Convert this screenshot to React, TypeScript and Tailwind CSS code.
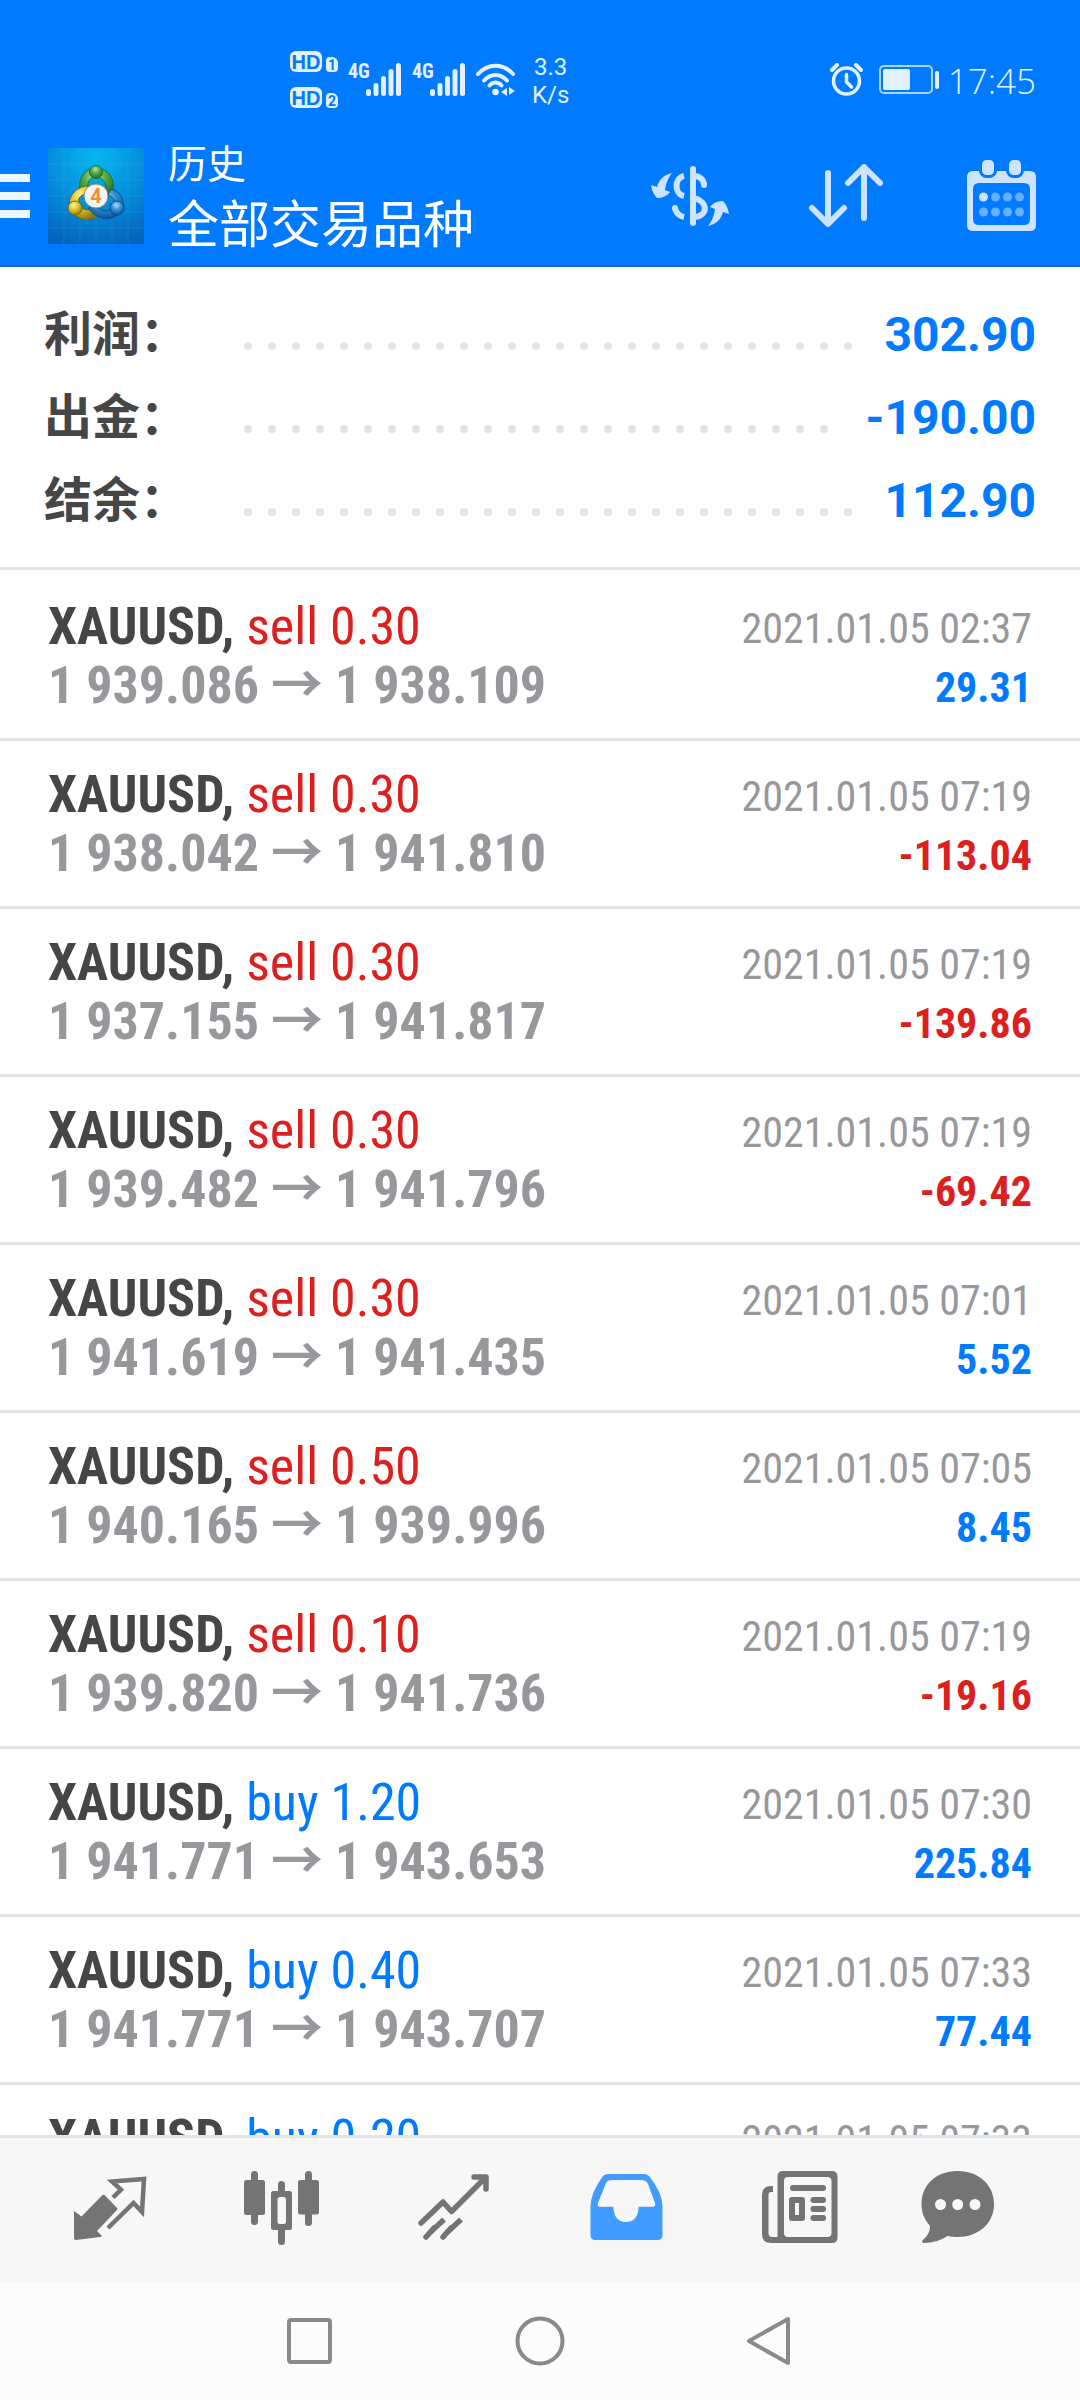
import { type ReactNode } from 'react';

interface Trade {
    side: 'sell' | 'buy';
    volume: string;
    open: string;
    close: string;
    time: string;
    profit: string;
}

const SUMMARY = [
    { label: '利润：', value: '302.90' },
    { label: '出金：', value: '-190.00' },
    { label: '结余：', value: '112.90' },
];

const TRADES: Trade[] = [
    { side: 'sell', volume: '0.30', open: '1 939.086', close: '1 938.109', time: '2021.01.05 02:37', profit: '29.31' },
    { side: 'sell', volume: '0.30', open: '1 938.042', close: '1 941.810', time: '2021.01.05 07:19', profit: '-113.04' },
    { side: 'sell', volume: '0.30', open: '1 937.155', close: '1 941.817', time: '2021.01.05 07:19', profit: '-139.86' },
    { side: 'sell', volume: '0.30', open: '1 939.482', close: '1 941.796', time: '2021.01.05 07:19', profit: '-69.42' },
    { side: 'sell', volume: '0.30', open: '1 941.619', close: '1 941.435', time: '2021.01.05 07:01', profit: '5.52' },
    { side: 'sell', volume: '0.50', open: '1 940.165', close: '1 939.996', time: '2021.01.05 07:05', profit: '8.45' },
    { side: 'sell', volume: '0.10', open: '1 939.820', close: '1 941.736', time: '2021.01.05 07:19', profit: '-19.16' },
    { side: 'buy', volume: '1.20', open: '1 941.771', close: '1 943.653', time: '2021.01.05 07:30', profit: '225.84' },
    { side: 'buy', volume: '0.40', open: '1 941.771', close: '1 943.707', time: '2021.01.05 07:33', profit: '77.44' },
    { side: 'buy', volume: '0.20', open: '1 941.771', close: '1 943.707', time: '2021.01.05 07:33', profit: '38.72' },
];

function HdBadge({ sim }: { sim: string }) {
    return (
        <div className="flex items-end gap-1">
            <span className="flex h-[21px] w-8 items-center justify-center rounded-md bg-[#e3f1ff] font-['Liberation_Sans'] text-[20px] leading-5 font-bold text-[#007aff]">
                HD
            </span>
            <span className="flex h-[15px] w-3 items-center justify-center rounded-sm rounded-tr-md bg-[#e3f1ff] text-[14px] leading-4 font-bold text-[#007aff]">
                {sim}
            </span>
        </div>
    );
}

function Signal() {
    return (
        <div className="flex h-[33px] items-start">
            <span className="w-[18px] font-['Roboto_Condensed','Roboto',sans-serif] text-[20px] leading-4 font-bold">4G</span>
            <svg width="36" height="33" viewBox="0 0 36 33" fill="currentColor" aria-hidden="true">
                <rect x="0" y="26" width="5" height="7" rx="2.5" />
                <rect x="7.5" y="20" width="5" height="13" rx="2.5" />
                <rect x="15" y="13" width="5" height="20" rx="2.5" />
                <rect x="22.5" y="6" width="5" height="27" rx="2.5" />
                <rect x="30" y="0" width="5" height="33" rx="2.5" />
            </svg>
        </div>
    );
}

function StatusBar() {
    return (
        <div className="flex items-start justify-between pt-[51px] pr-11 pl-[290px] text-[#e3f1ff]">
            <div className="flex items-start">
                <div className="mr-2.5 flex flex-col gap-[15px]">
                    <HdBadge sim="1" />
                    <HdBadge sim="2" />
                </div>
                <div className="flex gap-2.5 pt-3">
                    <Signal />
                    <Signal />
                    <svg width="40" height="33" viewBox="0 0 40 33" fill="none" stroke="currentColor" strokeWidth="4" strokeLinecap="round" aria-hidden="true">
                        <path d="M2 11C12 0 27 0 37 11" />
                        <path d="M8 17.500C15 10 24 10 31 17.500" />
                        <path d="M13.500 22.500C17 18.500 22 18.500 25.500 22.500" />
                        <circle cx="19.500" cy="29" r="3.300" fill="currentColor" stroke="none" />
                        <path d="M31 25V33L25 29ZM33 24L39 28L33 32Z" fill="currentColor" stroke="none" />
                    </svg>
                </div>
                <div className="ml-4 pt-0.5 text-center text-[24px] leading-7">
                    3.3
                    <br />
                    K/s
                </div>
            </div>
            <div className="flex items-start pt-3">
                <svg width="33" height="33" viewBox="0 0 33 33" fill="none" stroke="currentColor" strokeWidth="3.500" strokeLinecap="round" aria-hidden="true">
                    <circle cx="16.500" cy="18" r="13" />
                    <path d="M16.500 11.500V19L21.500 24" strokeWidth="3.500" />
                    <path d="M2 7L7 2M31 7L26 2" strokeWidth="4" />
                </svg>
                <svg className="ml-4" width="61" height="33" viewBox="0 0 61 33" aria-hidden="true">
                    <rect x="1" y="3" width="52" height="27" rx="4" fill="none" stroke="#a9d4ff" strokeWidth="2" />
                    <rect x="4" y="6" width="27" height="21" rx="2" fill="currentColor" />
                    <rect x="56" y="8" width="4" height="18" rx="2" fill="currentColor" />
                </svg>
                <span className="ml-2 font-['Open_Sans',sans-serif] text-[35px] leading-9 font-light">17:45</span>
            </div>
        </div>
    );
}

function AppLogo() {
    return (
        <svg className="shrink-0" width="96" height="96" viewBox="0 0 96 96" role="img" aria-label="MetaTrader 4">
            <defs>
                <radialGradient id="sky" cx="50%" cy="10%" r="95%">
                    <stop offset="0" stopColor="#06b7ee" />
                    <stop offset="0.500" stopColor="#058fdf" />
                    <stop offset="1" stopColor="#0563bb" />
                </radialGradient>
                <radialGradient id="green" cx="45%" cy="30%" r="70%">
                    <stop offset="0" stopColor="#b4e69b" />
                    <stop offset="0.500" stopColor="#4fa545" />
                    <stop offset="1" stopColor="#227226" />
                </radialGradient>
                <radialGradient id="gold" cx="40%" cy="30%" r="75%">
                    <stop offset="0" stopColor="#fff38a" />
                    <stop offset="0.500" stopColor="#d6c12f" />
                    <stop offset="1" stopColor="#86740c" />
                </radialGradient>
                <radialGradient id="azure" cx="45%" cy="30%" r="70%">
                    <stop offset="0" stopColor="#a9defa" />
                    <stop offset="0.500" stopColor="#2f8fd2" />
                    <stop offset="1" stopColor="#0a559a" />
                </radialGradient>
            </defs>
            <rect width="96" height="96" fill="url(#sky)" />
            <path d="M0 16H96M0 32H96M0 48H96M0 64H96M0 80H96M16 0V96M32 0V96M48 0V96M64 0V96M80 0V96" stroke="#4cc4f5" strokeOpacity="0.180" />
            <path d="M33 48C28 32 36 20 48 20C60 20 69 32 64 46L57 50C61 38 56 29 48 29C41 29 38 36 41 43Z" fill="url(#green)" stroke="#246e2a" />
            <path d="M41 38C28 38 19 49 22 60C26 71 39 75 50 68L46 60C40 63 33 62 31 56C29 50 33 46 40 46Z" fill="url(#gold)" stroke="#75680f" />
            <path d="M63 41C73 43 78 54 73 63C66 74 50 73 40 60L48 57C53 64 61 65 65 59C68 54 66 49 60 47Z" fill="url(#azure)" stroke="#0d4f8d" />
            <circle cx="48" cy="24" r="6.500" fill="url(#green)" stroke="#246e2a" />
            <circle cx="27" cy="60" r="7" fill="url(#gold)" stroke="#75680f" />
            <circle cx="69" cy="60" r="7" fill="url(#azure)" stroke="#0d4f8d" />
            <circle cx="48" cy="48" r="12" fill="#f4f3f1" stroke="#7c8a7c" />
            <text x="48" y="55" textAnchor="middle" fontFamily="Roboto" fontSize="20" fontWeight="700" fill="#f0912d">4</text>
        </svg>
    );
}

function Header() {
    return (
        <div className="mt-[23px] flex items-center">
            <button aria-label="菜单" className="flex h-24 w-12 shrink-0 flex-col justify-center gap-[10px]">
                <span className="h-2 w-[30px] bg-[#ecf7ff]" />
                <span className="h-2 w-[30px] bg-[#ecf7ff]" />
                <span className="h-2 w-[30px] bg-[#ecf7ff]" />
            </button>
            <AppLogo />
            <div className="ml-6 flex-1 pt-1.5 whitespace-nowrap text-white">
                <p className="text-[39px] leading-[54px]">历史</p>
                <h1 className="text-[51px] leading-[68px]">全部交易品种</h1>
            </div>
            <button aria-label="品种" className="flex h-24 w-[156px] items-center justify-center text-[#cce4ff]">
                <svg width="78" height="60" viewBox="0 0 78 60" fill="currentColor">
                    <rect x="39" y="0" width="6" height="60" rx="3" />
                    <path d="M21 7C12 9 8 14 6 21L0 19C1 25 3 29 6 32C11 32 16 30 19 26L14 24C15 17 17 12 21 7Z" />
                    <path d="M57 60C66 58 70 53 72 46L78 48C77 42 75 38 72 35C67 35 62 37 59 41L64 43C63 50 61 55 57 60Z" />
                    <g fill="none" stroke="currentColor" strokeWidth="6">
                        <path d="M33 10C23 12 23 28 33 30" />
                        <path d="M24 42C25 47 28 50 33 51" />
                        <path d="M43 10C49 10 53 14 53 19" />
                        <path d="M43 32C58 36 57 50 43 51" />
                    </g>
                    <circle cx="24" cy="42" r="3" />
                    <circle cx="53" cy="19" r="3" />
                </svg>
            </button>
            <button aria-label="排序" className="flex h-24 w-[156px] items-center justify-center text-[#cce4ff]">
                <svg width="74" height="64" viewBox="0 0 74 64" fill="none" stroke="currentColor" strokeWidth="6" strokeLinecap="round" strokeLinejoin="round">
                    <path d="M19 9V59M3 44L19 60L35 44" />
                    <path d="M55 54V4M39 19L55 3L71 19" />
                </svg>
            </button>
            <button aria-label="日期" className="flex h-24 w-[156px] items-center justify-center text-[#cce4ff]">
                <svg width="70" height="72" viewBox="0 0 70 72" fill="currentColor">
                    <path fillRule="evenodd" d="M6 11H63Q69 11 69 17V65Q69 71 63 71H6Q0 71 0 65V17Q0 11 6 11ZM12 23Q6 23 6 29V59Q6 65 12 65H57Q63 65 63 59V29Q63 23 57 23Z" />
                    <rect x="13.500" y="-1.500" width="15" height="18" rx="6" stroke="#007aff" strokeWidth="3" />
                    <rect x="40.500" y="-1.500" width="15" height="18" rx="6" stroke="#007aff" strokeWidth="3" />
                    <circle cx="16.500" cy="37" r="4.500" />
                    <g fill="#66afff">
                        <circle cx="28.500" cy="37" r="4.500" />
                        <circle cx="40.500" cy="37" r="4.500" />
                        <circle cx="52.500" cy="37" r="4.500" />
                        <circle cx="16.500" cy="52" r="4.500" />
                        <circle cx="28.500" cy="52" r="4.500" />
                        <circle cx="40.500" cy="52" r="4.500" />
                        <circle cx="52.500" cy="52" r="4.500" />
                    </g>
                </svg>
            </button>
        </div>
    );
}

function SummaryRow({ label, value }: { label: string; value: string }) {
    return (
        <div className="flex h-[83px] items-center text-[48px] leading-[60px] font-bold">
            <dt className="w-[196px] shrink-0 whitespace-nowrap text-[#464646]">{label}</dt>
            {/* Dots that do not fit wrap to a hidden second line */}
            <div className="mr-3 flex h-8 flex-1 flex-wrap overflow-hidden pt-[23px]" aria-hidden="true">
                {Array.from({ length: 40 }, (_, i) => (
                    <span key={i} className="mr-3 mb-6 ml-1 size-2 rounded-full bg-[#e4e4e4]" />
                ))}
            </div>
            <dd className="text-[#007aff]">{value}</dd>
        </div>
    );
}

function TradeRow({ trade }: { trade: Trade }) {
    return (
        <li className="flex h-[168px] shrink-0 items-start justify-between border-b-3 border-[#e4e4e4] px-12 pt-6 font-['Roboto_Condensed','Roboto','Noto_Sans_CJK_SC',sans-serif] whitespace-nowrap">
            <div className="text-[52px] leading-[59px]">
                <p>
                    <span className="font-bold text-[#464646]">XAUUSD, </span>
                    <span className={trade.side === 'buy' ? 'text-[#007aff]' : 'text-[#dc2020]'}>
                        {trade.side} {trade.volume}
                    </span>
                </p>
                <p className="font-bold text-[#97989c]">
                    {trade.open} → {trade.close}
                </p>
            </div>
            <div className="pt-0.5 text-right text-[42px] leading-[59px]">
                <p className="text-[#97989c]">{trade.time}</p>
                <p className={trade.profit.startsWith('-') ? 'font-bold text-[#dc2020]' : 'font-bold text-[#007aff]'}>
                    {trade.profit}
                </p>
            </div>
        </li>
    );
}

function Tab({ label, active, children }: { label: string; active?: boolean; children: ReactNode }) {
    return (
        <button
            aria-label={label}
            className={`flex flex-1 items-center justify-center ${active ? 'text-[#429bff]' : 'text-[#747474]'}`}
        >
            <svg width="120" height="84" viewBox="0 0 120 84" fill="currentColor">
                {children}
            </svg>
        </button>
    );
}

function TabBar() {
    return (
        <nav className="flex h-[147px] shrink-0 border-t-3 border-[#e4e4e4] bg-[#f7f7f7] px-6">
            <Tab label="行情">
                <path d="M52 27.500Q53.500 26 55 27.500L67 40Q68 41 67 42L47 63L51.500 67.500Q52 69 50 69L26 72Q24 72 24 70V43L31.500 48.500Z" />
                <path d="M63 29.500L71 21.700L62 13.500L94 11L92 44L83.500 35L58 60" fill="none" stroke="currentColor" strokeWidth="4.500" strokeLinejoin="miter" />
            </Tab>
            <Tab label="图表">
                <rect x="22" y="12" width="21" height="35" rx="2.500" />
                <rect x="29" y="3" width="7" height="54" rx="3.500" />
                <rect x="56" y="13" width="7" height="12" rx="3.500" />
                <rect x="56" y="58" width="7" height="19" rx="3.500" />
                <path fillRule="evenodd" d="M51.500 23H67.500Q70 23 70 25.500V59.500Q70 62 67.500 62H51.500Q49 62 49 59.500V25.500Q49 23 51.500 23ZM58 29Q55.500 29 55.500 31.500V53.500Q55.500 56 58 56H61.500Q64 56 64 53.500V31.500Q64 29 61.500 29Z" />
                <rect x="76" y="12" width="21" height="34.500" rx="2.500" />
                <rect x="83" y="3" width="7" height="55" rx="3.500" />
            </Tab>
            <Tab label="交易">
                <g fill="none" stroke="currentColor" strokeWidth="5.500" strokeLinecap="round">
                    <path d="M27 55L49 34L57.500 43.500L91 10" strokeLinejoin="round" />
                    <path d="M80 9H92V21" strokeLinejoin="round" />
                    <path d="M32 69L40 60M49 69L57 60" />
                    <path d="M36 64.500L50 51.500M53 64.500L67 51.500" strokeLinecap="butt" />
                </g>
            </Tab>
            <Tab label="历史" active>
                <path fillRule="evenodd" d="M42 6H78Q81 6 83 8Q96 24 96.500 38V67Q96.500 72 91.500 72H29.500Q24.500 72 24.500 67V38Q25 24 37 8Q39 6 42 6ZM46 12Q41.500 12 40 15L32 35Q31 38.700 34 38.700H47.500V41Q49 54 60 54Q71 54 72.500 41V38.700H87Q90 38.700 89 35L82 16Q80 12 75 12Z" />
            </Tab>
            <Tab label="新闻">
                <path fillRule="evenodd" d="M45 3H94Q99.500 3 99.500 8.500V69.500Q99.500 75 94 75H33Q24 75 24 66V27Q24 18 33 18H35V24H33Q30.500 24 30.500 27V65Q30.500 69 34.500 69H39.500V8.500Q39.500 3 45 3ZM50 9Q46 9 46 13V65Q46 69 50 69H89Q93.500 69 93.500 65V13Q93.500 9 89 9Z" />
                <rect x="52" y="17" width="36" height="6" rx="3" />
                <path fillRule="evenodd" d="M54 29H64Q67 29 67 32V50Q67 53 64 53H54Q51 53 51 50V32Q51 29 54 29ZM57 35V47H61V35Z" />
                <rect x="72.500" y="29" width="15.500" height="6" rx="3" />
                <rect x="72.500" y="38" width="15.500" height="6" rx="3" />
                <rect x="72.500" y="47" width="15.500" height="6" rx="3" />
            </Tab>
            <Tab label="消息">
                <path fillRule="evenodd" d="M47.500 3C69 3 84 17 84 36C84 56 68 69 47.500 69Q42 69 37.500 68Q27 75 14 75Q10 74 14 71Q20 66 20 58C14 51 11.500 44 11.500 36C11.500 17 26 3 47.500 3ZM30.500 31A5.500 5.500 0 1 0 30.500 42A5.500 5.500 0 1 0 30.500 31ZM47.700 31A5.500 5.500 0 1 0 47.700 42A5.500 5.500 0 1 0 47.700 31ZM65 31A5.500 5.500 0 1 0 65 42A5.500 5.500 0 1 0 65 31Z" />
            </Tab>
        </nav>
    );
}

function SystemNav() {
    return (
        <div className="flex h-[118px] shrink-0 items-center justify-center gap-[180px] bg-[#fcfcfc] text-[#8a8a8a]">
            <button aria-label="最近任务">
                <svg width="50" height="50" viewBox="0 0 50 50" fill="none" stroke="currentColor" strokeWidth="4">
                    <rect x="4" y="4" width="41" height="42" rx="2" />
                </svg>
            </button>
            <button aria-label="主屏幕">
                <svg width="50" height="50" viewBox="0 0 50 50" fill="none" stroke="currentColor" strokeWidth="4">
                    <circle cx="25" cy="25" r="22.500" />
                </svg>
            </button>
            <button aria-label="返回">
                <svg width="50" height="50" viewBox="0 0 50 50" fill="none" stroke="currentColor" strokeWidth="4" strokeLinejoin="round">
                    <path d="M43 3V47L4 25Z" />
                </svg>
            </button>
        </div>
    );
}

export default function App() {
    return (
        <div className="flex h-screen flex-col overflow-hidden bg-white font-['Roboto','Noto_Sans_CJK_SC',sans-serif]">
            <header className="h-[267px] shrink-0 border-b-2 border-[#1a66c4] bg-[#007aff]">
                <StatusBar />
                <Header />
            </header>

            <main className="flex min-h-0 flex-1 flex-col overflow-y-auto [scrollbar-width:none]">
                <dl className="h-[303px] shrink-0 border-b-3 border-[#e4e4e4] pt-[26px] pr-11 pl-11">
                    {SUMMARY.map((row) => (
                        <SummaryRow key={row.label} label={row.label} value={row.value} />
                    ))}
                </dl>
                <ul className="pt-[3px]">
                    {TRADES.map((trade, i) => (
                        <TradeRow key={i} trade={trade} />
                    ))}
                </ul>
            </main>

            <TabBar />
            <SystemNav />
        </div>
    );
}
